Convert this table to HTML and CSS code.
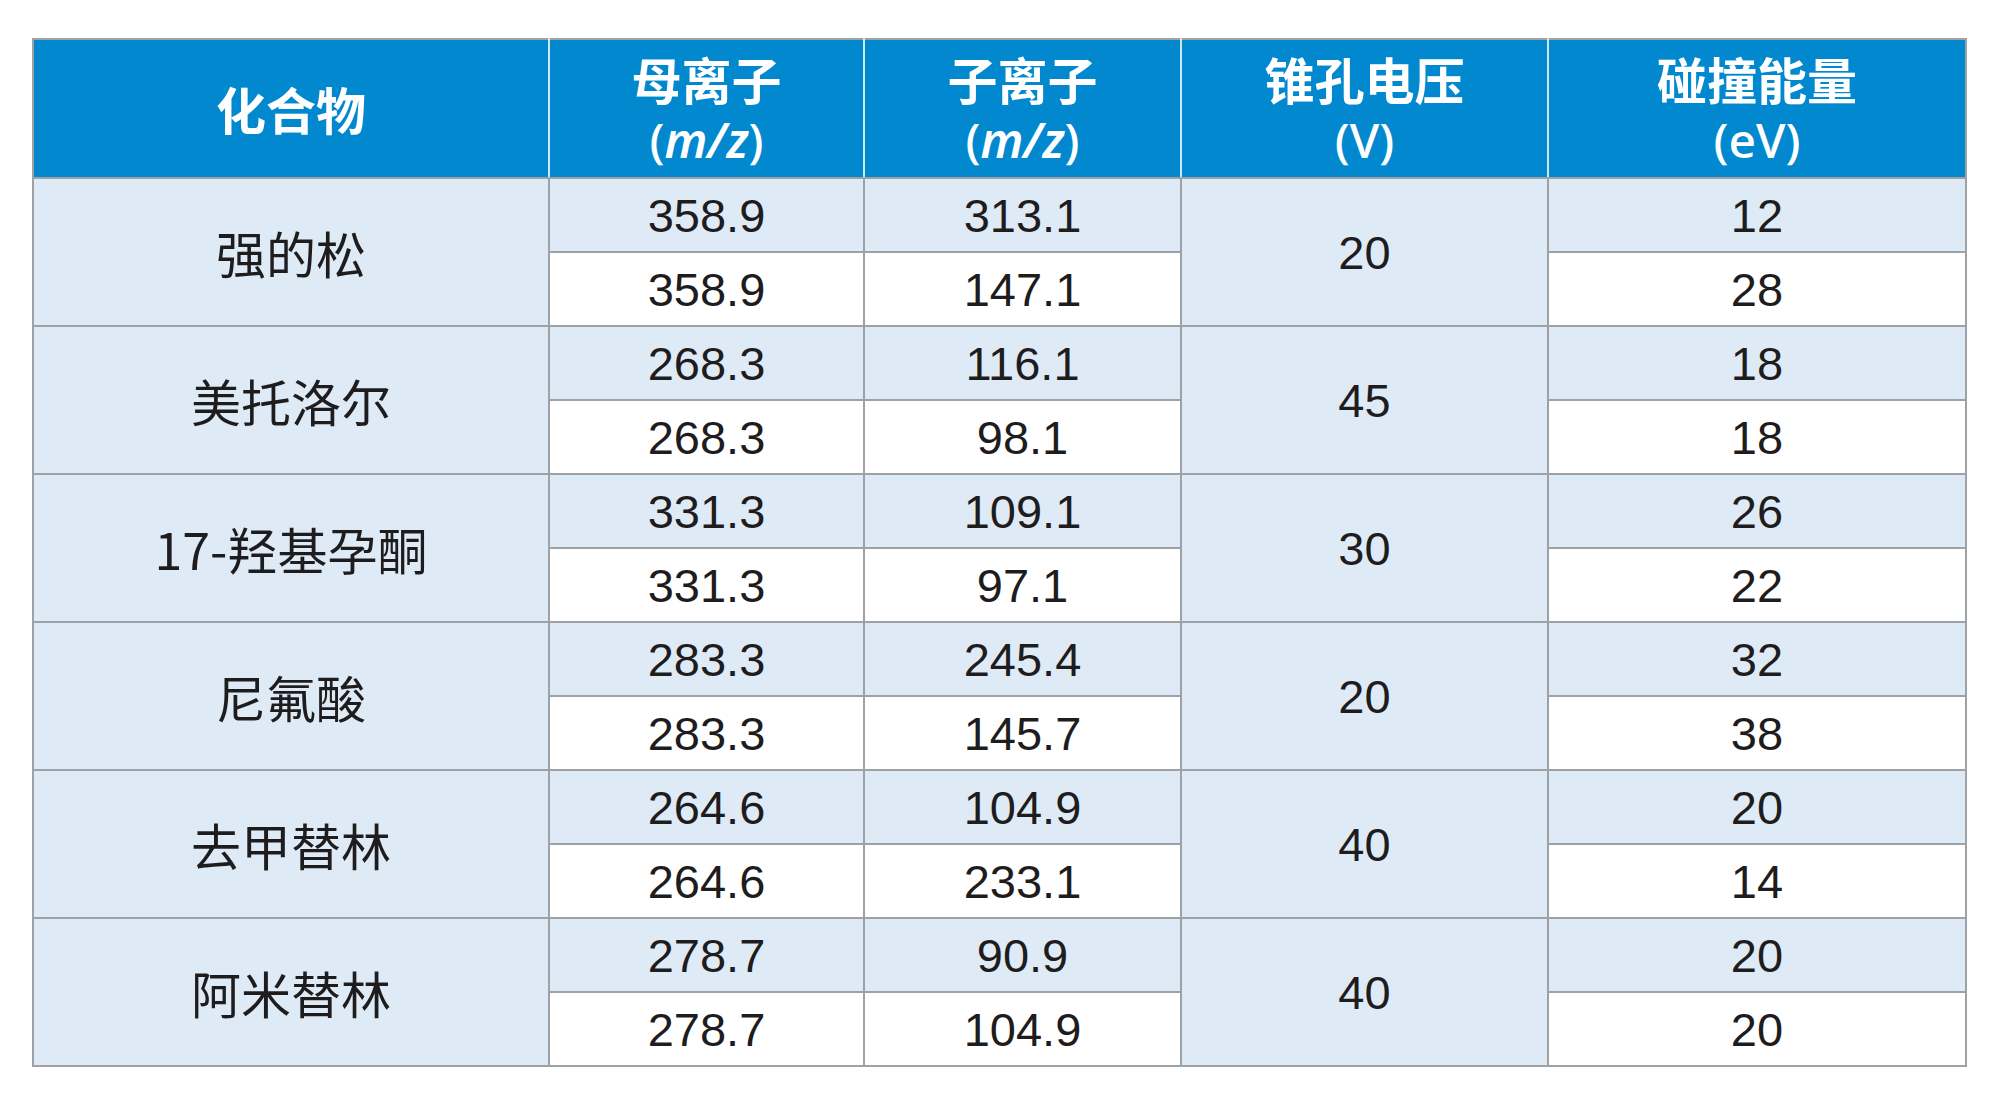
FILE: index.html
```html
<!DOCTYPE html>
<html lang="zh">
<head>
<meta charset="utf-8">
<title>化合物参数表</title>
<link rel="stylesheet" href="styles.css">
</head>
<body>
<table class="data">
  <colgroup>
    <col class="c1"><col class="c2"><col class="c3"><col class="c4"><col class="c5">
  </colgroup>
  <thead>
    <tr class="head">
      <th><span class="zh">化合物</span></th>
      <th><span class="zh">母离子</span><span class="unit">(<i>m/z</i>)</span></th>
      <th><span class="zh">子离子</span><span class="unit">(<i>m/z</i>)</span></th>
      <th><span class="zh">锥孔电压</span><span class="unit">(V)</span></th>
      <th><span class="zh">碰撞能量</span><span class="unit">(eV)</span></th>
    </tr>
  </thead>
  <tbody>
    <tr class="odd"><td rowspan="2" class="name">强的松</td><td>358.9</td><td>313.1</td><td rowspan="2" class="span">20</td><td>12</td></tr>
    <tr class="even"><td>358.9</td><td>147.1</td><td>28</td></tr>
    <tr class="odd"><td rowspan="2" class="name">美托洛尔</td><td>268.3</td><td>116.1</td><td rowspan="2" class="span">45</td><td>18</td></tr>
    <tr class="even"><td>268.3</td><td>98.1</td><td>18</td></tr>
    <tr class="odd"><td rowspan="2" class="name">17-羟基孕酮</td><td>331.3</td><td>109.1</td><td rowspan="2" class="span">30</td><td>26</td></tr>
    <tr class="even"><td>331.3</td><td>97.1</td><td>22</td></tr>
    <tr class="odd"><td rowspan="2" class="name">尼氟酸</td><td>283.3</td><td>245.4</td><td rowspan="2" class="span">20</td><td>32</td></tr>
    <tr class="even"><td>283.3</td><td>145.7</td><td>38</td></tr>
    <tr class="odd"><td rowspan="2" class="name">去甲替林</td><td>264.6</td><td>104.9</td><td rowspan="2" class="span">40</td><td>20</td></tr>
    <tr class="even"><td>264.6</td><td>233.1</td><td>14</td></tr>
    <tr class="odd"><td rowspan="2" class="name">阿米替林</td><td>278.7</td><td>90.9</td><td rowspan="2" class="span">40</td><td>20</td></tr>
    <tr class="even"><td>278.7</td><td>104.9</td><td>20</td></tr>
  </tbody>
</table>
</body>
</html>
```
FILE: styles.css
```css
html, body {
  margin: 0;
  padding: 0;
  background: #ffffff;
}

body {
  font-family: "Liberation Sans", "Noto Sans CJK SC", sans-serif;
  color: #1e1c1d;
}

.data {
  margin: 38px 0 0 32px;
  border-collapse: collapse;
  table-layout: fixed;
  width: 1933px;
  border: 2px solid #9ea2a6;
}

.c1 { width: 516px; }
.c2 { width: 315px; }
.c3 { width: 317px; }
.c4 { width: 367px; }
.c5 { width: 418px; }

.head th {
  height: 137px;
  padding: 0;
  background: #0288cf;
  color: #ffffff;
  text-align: center;
  vertical-align: middle;
  border-left: 2px solid #cfe6f5;
  border-right: 2px solid #cfe6f5;
  border-top: 2px solid #9ea2a6;
  border-bottom: 2px solid #9ea2a6;
  font-weight: normal;
}

.head th:first-child { border-left: 2px solid #9ea2a6; }
.head th:last-child { border-right: 2px solid #9ea2a6; }

.zh {
  display: block;
  height: 61px;
  line-height: 61px;
  font-family: "Noto Sans CJK SC", sans-serif;
  font-weight: 700;
  font-size: 50px;
}

.unit {
  display: block;
  height: 61px;
  line-height: 61px;
  font-family: "Noto Sans", "Noto Sans CJK SC", sans-serif;
  font-weight: 500;
  font-size: 48px;
}

.unit i {
  font-style: italic;
  font-weight: 600;
}

tbody td {
  height: 72px;
  padding: 0;
  text-align: center;
  vertical-align: middle;
  border: 2px solid #9ea2a6;
  font-size: 47px;
  line-height: 1;
}

tbody tr.odd td { background: #deebf7; }
tbody tr.even td { background: #ffffff; }

tbody td.name,
tbody td.span {
  background: #deebf7;
}

tbody td.name {
  font-family: "Noto Sans CJK SC", sans-serif;
  font-size: 50px;
}
```
